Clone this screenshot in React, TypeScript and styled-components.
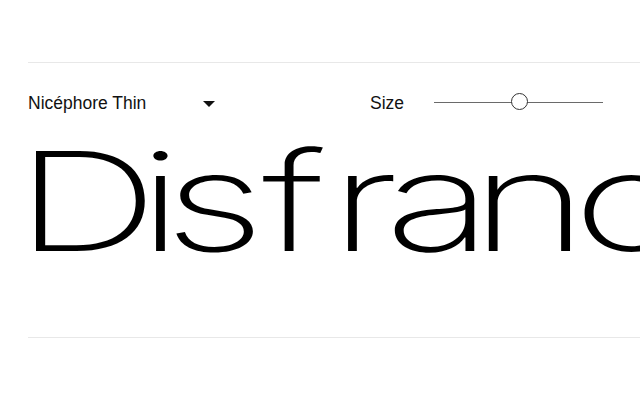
import React from "react";
import styled, { createGlobalStyle } from "styled-components";

const Global = createGlobalStyle`
  html, body { margin: 0; padding: 0; background: #fff; overflow: hidden; }
  body { font-family: "Liberation Sans", Arial, sans-serif; color: #111; }
`;

const Page = styled.div`
  width: 640px;
  height: 400px;
  overflow: hidden;
  padding-top: 62px;
  box-sizing: border-box;
`;

const Specimen = styled.section`
  margin-left: 28px;
  width: 700px;
  border-top: 1px solid #e8e8e8;
  border-bottom: 1px solid #e8e8e8;
  padding-bottom: 67px;
`;

const Controls = styled.div`
  display: flex;
  align-items: center;
  height: 24px;
  margin-top: 28px;
`;

const FontSelect = styled.div`
  width: 188px;
  display: flex;
  align-items: center;
  justify-content: space-between;
  font-size: 17.5px;
  color: #111;
`;

const Caret = styled.span`
  width: 0;
  height: 0;
  border-left: 6px solid transparent;
  border-right: 6px solid transparent;
  border-top: 6px solid #111;
  margin-top: 2px;
  margin-right: 1px;
`;

const SizeLabel = styled.span`
  margin-left: 154px;
  font-size: 17.5px;
  color: #111;
`;

const Track = styled.div`
  position: relative;
  margin-left: 30px;
  margin-top: -2px;
  width: 169px;
  height: 1px;
  background: #6a6a6a;
`;

const Thumb = styled.div`
  position: absolute;
  top: -8.5px;
  width: 15px;
  height: 15px;
  border-radius: 50%;
  border: 1.3px solid #333;
  background: #fff;
`;

const Sample = styled.div`
  margin-top: 17px;
  font-family: Inter, "Liberation Sans", sans-serif;
  font-weight: 170;
  font-size: 138px;
  line-height: 1;
  white-space: nowrap;
  color: #000;
  transform: scaleX(1.45);
  transform-origin: left center;
  margin-left: -13px;
`;

const Glyph = styled.span<{ $w: number }>`
  display: inline-block;
  width: ${(p) => p.$w}px;
`;

const letters: [string, number][] = [
  ["D", 84.8],
  ["i", 17.9],
  ["s", 67.6],
  ["f", 46.9],
  ["r", 37.9],
  ["a", 59.3],
  ["n", 70.3],
  ["c", 62],
  ["h", 70],
  ["i", 18],
  ["s", 62],
  ["e", 62],
];

export default function App() {
  const value = 0.5;
  return (
    <>
      <Global />
      <Page>
        <Specimen>
          <Controls>
            <FontSelect>
              <span>Nicéphore Thin</span>
              <Caret />
            </FontSelect>
            <SizeLabel>Size</SizeLabel>
            <Track>
              <Thumb style={{ left: `calc(${value * 100}% - 7.5px)` }} />
            </Track>
          </Controls>
          <Sample>
            {letters.map(([ch, w], i) => (
              <Glyph key={i} $w={w}>
                {ch}
              </Glyph>
            ))}
          </Sample>
        </Specimen>
      </Page>
    </>
  );
}
